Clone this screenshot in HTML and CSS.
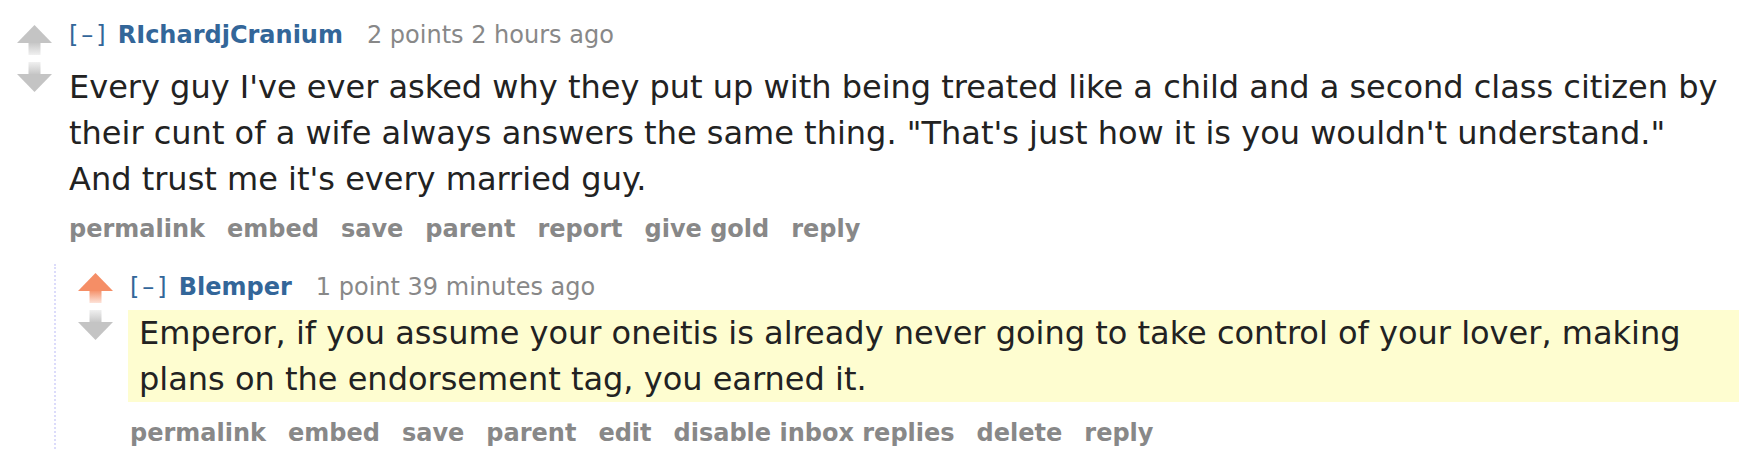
FILE: index.html
```html
<!DOCTYPE html>
<html>
<head>
<meta charset="utf-8">
<link rel="stylesheet" href="styles.css">
</head>
<body>
<div class="comment top">
  <div class="midcol">
    <svg class="arrow" width="35" height="30" viewBox="0 0 35 30">
      <defs>
        <linearGradient id="gu" x1="0" y1="0" x2="0" y2="1">
          <stop offset="0" stop-color="#c4c4c4"/>
          <stop offset="1" stop-color="#c4c4c4" stop-opacity="0.25"/>
        </linearGradient>
      </defs>
      <polygon points="17.5,0 0,18 35,18" fill="#c4c4c4"/>
      <rect x="11.5" y="17" width="12" height="13" fill="url(#gu)"/>
    </svg>
    <svg class="arrow down" width="35" height="30" viewBox="0 0 35 30">
      <defs>
        <linearGradient id="gd" x1="0" y1="1" x2="0" y2="0">
          <stop offset="0" stop-color="#c4c4c4"/>
          <stop offset="1" stop-color="#c4c4c4" stop-opacity="0.25"/>
        </linearGradient>
      </defs>
      <rect x="11.5" y="0" width="12" height="13" fill="url(#gd)"/>
      <polygon points="0,12 35,12 17.5,30" fill="#c4c4c4"/>
    </svg>
  </div>
  <div class="entry">
    <p class="tagline"><span class="expand">[–]</span><span class="author">RIchardjCranium</span><span class="score">2 points 2 hours ago</span></p>
    <div class="md">Every guy I've ever asked why they put up with being treated like a child and a second class citizen by their cunt of a wife always answers the same thing. "That's just how it is you wouldn't understand." And trust me it's every married guy.</div>
    <ul class="buttons">
      <li>permalink</li><li>embed</li><li>save</li><li>parent</li><li>report</li><li>give gold</li><li>reply</li>
    </ul>
  </div>
  <div class="child">
    <div class="comment nested">
      <div class="midcol">
        <svg class="arrow" width="35" height="30" viewBox="0 0 35 30">
          <defs>
            <linearGradient id="go" x1="0" y1="0" x2="0" y2="1">
              <stop offset="0" stop-color="#f58e66"/>
              <stop offset="1" stop-color="#f58e66" stop-opacity="0.25"/>
            </linearGradient>
          </defs>
          <polygon points="17.5,0 0,18 35,18" fill="#f58e66"/>
          <rect x="11.5" y="17" width="12" height="13" fill="url(#go)"/>
        </svg>
        <svg class="arrow down" width="35" height="30" viewBox="0 0 35 30">
          <rect x="11.5" y="0" width="12" height="13" fill="url(#gd)"/>
          <polygon points="0,12 35,12 17.5,30" fill="#c4c4c4"/>
        </svg>
      </div>
      <div class="entry">
        <p class="tagline"><span class="expand">[–]</span><span class="author">Blemper</span><span class="score">1 point 39 minutes ago</span></p>
        <div class="md own">Emperor, if you assume your oneitis is already never going to take control of your lover, making plans on the endorsement tag, you earned it.</div>
        <ul class="buttons">
          <li>permalink</li><li>embed</li><li>save</li><li>parent</li><li>edit</li><li>disable inbox replies</li><li>delete</li><li>reply</li>
        </ul>
      </div>
    </div>
  </div>
</div>
</body>
</html>
```

FILE: styles.css
```css
html, body {
  margin: 0;
  padding: 0;
  background: #ffffff;
}

body {
  font-family: "DejaVu Sans", Verdana, sans-serif;
  color: #222222;
  padding: 20px 7px 0 17px;
}

.comment {
  display: grid;
  grid-template-columns: 35px 1fr;
  column-gap: 17px;
}

.midcol {
  display: flex;
  flex-direction: column;
  gap: 7px;
  padding-top: 5px;
}

.nested .midcol {
  padding-top: 1px;
}

.arrow {
  display: block;
}

.entry {
  min-width: 0;
}

.tagline {
  margin: 0;
  font-size: 24px;
  line-height: 30px;
  color: #888888;
  white-space: nowrap;
}

.expand {
  color: #369;
  letter-spacing: 3px;
  margin-right: 9px;
}

.author {
  color: #369;
  font-weight: bold;
}

.score {
  margin-left: 24px;
}

.md {
  font-size: 32px;
  line-height: 46px;
  color: #222222;
  margin-top: 14px;
  padding-right: 8px;
}

.md.own {
  background: #fefdd0;
  margin-top: 8px;
  margin-left: -2px;
  padding-left: 11px;
  padding-right: 0;
}

.buttons {
  list-style: none;
  margin: 12px 0 0 0;
  padding: 0;
  display: flex;
  gap: 22px;
  font-size: 24px;
  line-height: 30px;
  font-weight: bold;
  color: #888888;
  white-space: nowrap;
}

.nested .buttons {
  margin-top: 16px;
}

.child {
  grid-column: 1 / -1;
  margin-left: 37px;
  margin-top: 20px;
  border-left: 2px dotted #dcdcfa;
}

.nested {
  padding: 8px 0 1px 22px;
}
```
